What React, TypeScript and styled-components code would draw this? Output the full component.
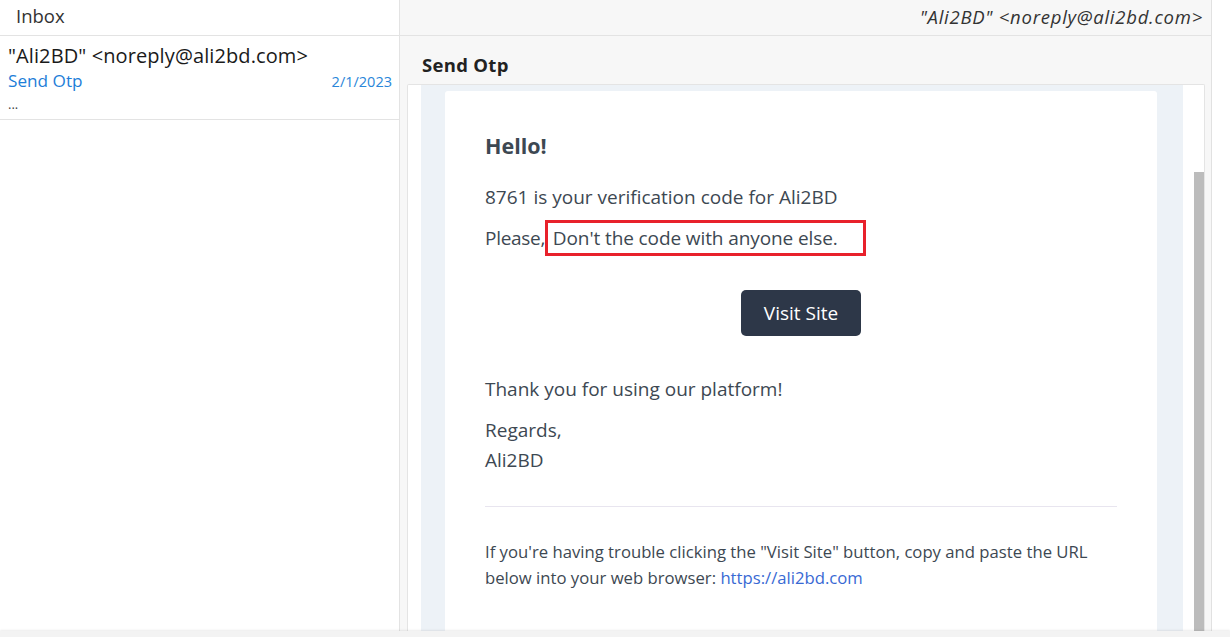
import React from "react";
import styled, { createGlobalStyle } from "styled-components";

const GlobalStyle = createGlobalStyle`
  html, body { margin: 0; padding: 0; background: #ffffff; }
  body { font-family: "Open Sans", "Noto Sans", Arial, sans-serif; }
  * { box-sizing: border-box; }
`;

const Page = styled.div`
  display: flex;
  flex-direction: column;
  width: 1230px;
  height: 637px;
  overflow: hidden;
  background: #ffffff;
`;

const Main = styled.div`
  flex: 1;
  display: flex;
  min-height: 0;
`;

const BottomBar = styled.div`
  height: 6px;
  flex: none;
  background: #f3f3f3;
  box-shadow: 0 -1px 2px rgba(0, 0, 0, 0.08);
  position: relative;
`;

const ListPanel = styled.aside`
  width: 400px;
  flex: none;
  border-right: 1px solid #e3e3e3;
  background: #ffffff;
  display: flex;
  flex-direction: column;
`;

const ListHeader = styled.div`
  height: 36px;
  padding: 3px 0 0 16px;
  border-bottom: 1px solid #e3e3e3;
  font-size: 18.5px;
  line-height: 25px;
  color: #333333;
`;

const MailItem = styled.div`
  height: 84px;
  padding: 7px 7px 0 8px;
  border-bottom: 1px solid #e3e3e3;
  display: flex;
  flex-direction: column;
`;

const Sender = styled.div`
  font-size: 20px;
  font-weight: 500;
  color: #1a1a1a;
  line-height: 26px;
  letter-spacing: 0.1px;
`;

const SubjectRow = styled.div`
  display: flex;
  justify-content: space-between;
  align-items: baseline;
  line-height: 24px;
`;

const ListSubject = styled.span`
  font-size: 17.2px;
  color: #1e7ed8;
`;

const DateText = styled.span`
  font-size: 14.5px;
  color: #2a86d9;
`;

const Preview = styled.div`
  margin-top: 2px;
  font-size: 13px;
  color: #444444;
  line-height: 16px;
`;

const ReaderPanel = styled.section`
  width: 812px;
  flex: none;
  background: #f7f7f7;
  border-right: 1px solid #e1e1e1;
  display: flex;
  flex-direction: column;
  min-height: 0;
`;

const ReaderHeader = styled.div`
  height: 36px;
  border-bottom: 1px solid #e3e3e3;
  display: flex;
  justify-content: flex-end;
  align-items: center;
  padding: 0 8px 2px 0;
  font-size: 18.5px;
  font-style: italic;
  color: #333333;
  letter-spacing: 0.75px;
`;

const ReaderSubject = styled.h2`
  margin: 0;
  padding: 16px 0 0 22px;
  height: 48px;
  font-size: 18.5px;
  line-height: 26px;
  font-weight: 700;
  color: #222222;
  letter-spacing: 0.3px;
`;

const Frame = styled.div`
  flex: 1;
  min-height: 0;
  margin: 0 6px 0 7px;
  border: 1px solid #e4e4e4;
  border-bottom: none;
  border-radius: 2px 2px 0 0;
  background: #ffffff;
  display: flex;
  overflow: hidden;
`;

const Viewport = styled.div`
  flex: 1;
  display: flex;
  padding: 0 11px 0 13px;
  min-width: 0;
`;

const Wrapper = styled.div`
  flex: 1;
  background: #edf2f7;
  padding: 6px 0 0 24px;
`;

const Card = styled.div`
  width: 712px;
  height: 600px;
  background: #ffffff;
  border-radius: 3px 3px 0 0;
  padding: 40px;
  color: #3d4852;
`;

const Hello = styled.h1`
  margin: 0 0 21px;
  font-size: 21.5px;
  line-height: 30px;
  font-weight: 700;
  color: #3d4852;
`;

const Para = styled.p`
  margin: 0 0 11px;
  font-size: 19px;
  line-height: 30px;
`;

const Lead = styled.span`
  letter-spacing: -0.3px;
`;

const Highlight = styled.span`
  border: 3px solid #e8212b;
  padding: 2px 25px 2px 0;
  letter-spacing: -0.1px;
`;

const ButtonRow = styled.div`
  display: flex;
  justify-content: center;
  margin: 37px 0 38px;
`;

const VisitButton = styled.a`
  display: inline-block;
  width: 120px;
  height: 46px;
  line-height: 46px;
  text-align: center;
  background: #2d3748;
  color: #ffffff;
  border-radius: 5px;
  font-size: 19px;
  text-decoration: none;
`;

const Divider = styled.div`
  margin-top: 31px;
  border-top: 1px solid #e8e5ef;
  padding-top: 32px;
`;

const SubCopy = styled.p`
  margin: 0;
  font-size: 16.7px;
  line-height: 26px;
  color: #3d4852;
`;

const Link = styled.a`
  color: #3869d4;
  text-decoration: none;
`;

const ScrollTrack = styled.div`
  width: 10px;
  flex: none;
  display: flex;
  flex-direction: column;
  background: #ffffff;
`;

const ScrollThumb = styled.div`
  margin-top: 87px;
  flex: 1;
  background: #bcbcbc;
`;

export default function App() {
  return (
    <>
      <GlobalStyle />
      <Page>
        <Main>
          <ListPanel>
            <ListHeader>Inbox</ListHeader>
            <MailItem>
              <Sender>"Ali2BD" &lt;noreply@ali2bd.com&gt;</Sender>
              <SubjectRow>
                <ListSubject>Send Otp</ListSubject>
                <DateText>2/1/2023</DateText>
              </SubjectRow>
              <Preview>...</Preview>
            </MailItem>
          </ListPanel>
          <ReaderPanel>
            <ReaderHeader>"Ali2BD" &lt;noreply@ali2bd.com&gt;</ReaderHeader>
            <ReaderSubject>Send Otp</ReaderSubject>
            <Frame>
              <Viewport>
                <Wrapper>
                  <Card>
                    <Hello>Hello!</Hello>
                    <Para>8761 is your verification code for Ali2BD</Para>
                    <Para>
                      <Lead>Please,</Lead>
                      <Highlight> Don't the code with anyone else.</Highlight>
                    </Para>
                    <ButtonRow>
                      <VisitButton href="#">Visit Site</VisitButton>
                    </ButtonRow>
                    <Para>Thank you for using our platform!</Para>
                    <Para>
                      Regards,
                      <br />
                      Ali2BD
                    </Para>
                    <Divider>
                      <SubCopy>
                        If you're having trouble clicking the "Visit Site" button, copy and paste the URL
                        <br />
                        below into your web browser: <Link href="#">https://ali2bd.com</Link>
                      </SubCopy>
                    </Divider>
                  </Card>
                </Wrapper>
              </Viewport>
              <ScrollTrack>
                <ScrollThumb />
              </ScrollTrack>
            </Frame>
          </ReaderPanel>
        </Main>
        <BottomBar />
      </Page>
    </>
  );
}
